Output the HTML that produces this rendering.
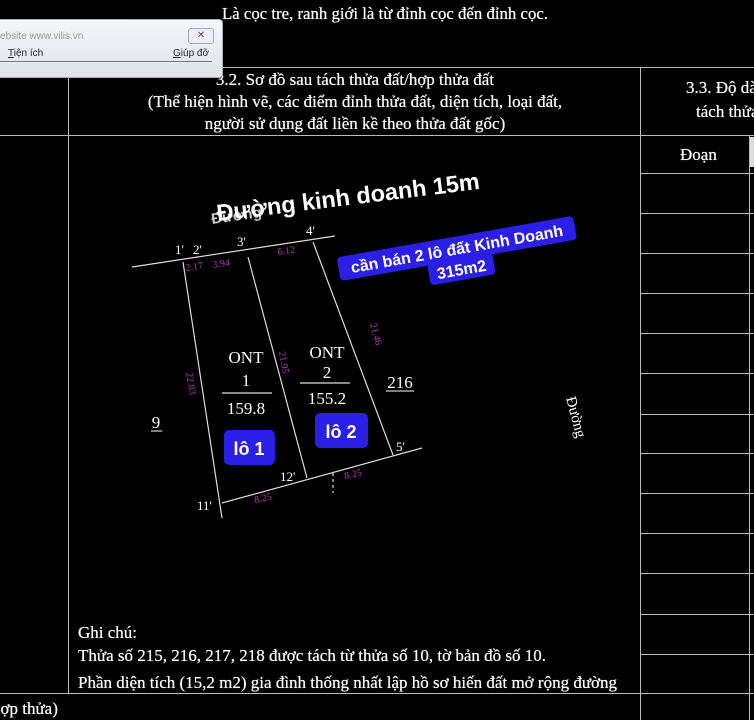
<!DOCTYPE html>
<html><head><meta charset="utf-8"><style>
html,body{margin:0;padding:0;background:#000;}
body{width:754px;height:720px;position:relative;overflow:hidden;font-family:"Liberation Serif","DejaVu Serif",serif;color:#fff;}
.t{position:absolute;white-space:nowrap;font-size:17px;text-shadow:0 0 0.6px #fff;}
.h{position:absolute;background:#bbb;height:1px;}
.v{position:absolute;background:#bbb;width:1px;}
</style></head><body>
<div class="t" style="left:222px;top:4px;font-size:16.8px">Là cọc tre, ranh giới là từ đỉnh cọc đến đỉnh cọc.</div>
<div class="h" style="left:0;top:67px;width:754px"></div>
<div class="h" style="left:0;top:135px;width:754px"></div>
<div class="h" style="left:0;top:693px;width:754px"></div>
<div class="v" style="left:68px;top:67px;height:626px"></div>
<div class="v" style="left:640px;top:67px;height:653px"></div>
<div class="v" style="left:749px;top:135px;height:585px"></div>
<div class="h" style="left:640px;top:173px;width:114px"></div>
<div class="h" style="left:640px;top:213px;width:114px"></div>
<div class="h" style="left:640px;top:253px;width:114px"></div>
<div class="h" style="left:640px;top:293px;width:114px"></div>
<div class="h" style="left:640px;top:333px;width:114px"></div>
<div class="h" style="left:640px;top:373px;width:114px"></div>
<div class="h" style="left:640px;top:414px;width:114px"></div>
<div class="h" style="left:640px;top:453px;width:114px"></div>
<div class="h" style="left:640px;top:493px;width:114px"></div>
<div class="h" style="left:640px;top:533px;width:114px"></div>
<div class="h" style="left:640px;top:573px;width:114px"></div>
<div class="h" style="left:640px;top:614px;width:114px"></div>
<div class="h" style="left:640px;top:654px;width:114px"></div>
<div style="position:absolute;left:750px;top:137px;width:4px;height:30px;background:#ddd"></div>

<div class="t" style="left:0;width:710px;text-align:center;top:70px">3.2. Sơ đồ sau tách thửa đất/hợp thửa đất</div>
<div class="t" style="left:0;width:710px;text-align:center;top:92px">(Thể hiện hình vẽ, các điểm đỉnh thửa đất, diện tích, loại đất,</div>
<div class="t" style="left:0;width:710px;text-align:center;top:114px">người sử dụng đất liền kề theo thửa đất gốc)</div>
<div class="t" style="left:686px;top:78px">3.3. Độ dài</div>
<div class="t" style="left:696px;top:102px">tách thửa</div>
<div class="t" style="left:680px;top:145px">Đoạn</div>

<div class="t" style="left:78px;top:623px">Ghi chú:</div>
<div class="t" style="left:78px;top:646px">Thửa số 215, 216, 217, 218 được tách từ thửa số 10, tờ bản đồ số 10.</div>
<div class="t" style="left:78px;top:673px">Phần diện tích (15,2 m2) gia đình thống nhất lập hồ sơ hiến đất mở rộng đường</div>
<div class="t" style="left:-8px;top:699px">hợp thửa)</div>

<svg width="754" height="720" style="position:absolute;left:0;top:0" font-family="Liberation Serif, serif">
<g stroke="#ddd" stroke-width="1.2" fill="none">
<line x1="132" y1="267" x2="335" y2="236"/>
<line x1="183" y1="262" x2="222" y2="518"/>
<line x1="248" y1="257" x2="307" y2="478"/>
<line x1="313" y1="242" x2="393" y2="455"/>
<line x1="222" y1="503" x2="422" y2="448"/>
<line x1="333" y1="473" x2="333" y2="493" stroke-dasharray="3 3"/>
<line x1="222" y1="393" x2="272" y2="393"/>
<line x1="300" y1="383" x2="350" y2="383"/>
</g>
<g fill="#c030c0" font-size="10">
<text x="186" y="271" transform="rotate(-8 186 271)">2.17</text>
<text x="213" y="268" transform="rotate(-8 213 268)">3.94</text>
<text x="278" y="255" transform="rotate(-8 278 255)">6.12</text>
<text x="186" y="373" transform="rotate(80 186 373)">22.83</text>
<text x="279" y="352" transform="rotate(80 279 352)">21.95</text>
<text x="370" y="324" transform="rotate(75 370 324)">21.46</text>
<text x="345" y="479" transform="rotate(-12 345 479)">8.25</text>
<text x="255" y="503" transform="rotate(-12 255 503)">8.25</text>
</g>
<g fill="#fff" font-size="13">
<text x="175" y="254">1'</text><text x="193" y="254">2'</text><text x="237" y="246">3'</text><text x="306" y="235">4'</text>
<text x="197" y="510">11'</text><text x="280" y="481">12'</text><text x="396" y="451">5'</text>
</g>
<g fill="#fff" font-size="17" text-anchor="middle">
<text x="246" y="363">ONT</text><text x="246" y="386">1</text><text x="246" y="414">159.8</text>
<text x="327" y="358">ONT</text><text x="327" y="378">2</text><text x="327" y="404">155.2</text>
<text x="400" y="388">216</text><text x="156" y="428">9</text>
</g>
<line x1="386" y1="391" x2="414" y2="391" stroke="#fff"/>
<line x1="151" y1="431" x2="162" y2="431" stroke="#fff"/>
<text x="566" y="398" fill="#fff" font-size="15" transform="rotate(75 566 398)">Đường</text>
<g font-family="Liberation Sans, sans-serif" font-weight="bold">
<text x="212" y="224" fill="#ccc" font-size="15" transform="rotate(-8 212 224)">Đường</text>
<text x="349" y="205" fill="#fff" font-size="23.5" text-anchor="middle" transform="rotate(-7 349 205)">Đường kinh doanh 15m</text>
<g transform="rotate(-10 460 255)">
<rect x="338" y="236" width="240" height="24" rx="4" fill="#2b1fe6"/>
<rect x="426" y="258" width="66" height="22" rx="4" fill="#2b1fe6"/>
<text x="458" y="254" fill="#fff" font-size="16" text-anchor="middle">cần bán 2 lô đất Kinh Doanh</text>
<text x="459" y="275" fill="#fff" font-size="16" text-anchor="middle">315m2</text>
</g>
<rect x="224" y="430" width="51" height="35" rx="5" fill="#2b1fe6"/>
<text x="249" y="455" fill="#fff" font-size="18" text-anchor="middle">lô 1</text>
<rect x="315" y="413" width="53" height="35" rx="5" fill="#2b1fe6"/>
<text x="341" y="438" fill="#fff" font-size="18" text-anchor="middle">lô 2</text>
</g>
</svg>

<div style="position:absolute;left:0;top:19px;width:222px;height:57px;background:linear-gradient(#f4f6f9,#dfe4ea);border:1px solid #aab;border-left:none;border-radius:0 4px 4px 0;font-family:'Liberation Sans',sans-serif;font-size:10px;color:#222">
<div style="position:absolute;left:0;top:11px;color:#999">ebsite www.vilis.vn</div>
<div style="position:absolute;left:188px;top:8px;width:24px;height:14px;border:1px solid #aaa;border-radius:3px;background:#eef;text-align:center;font-size:10px;line-height:14px;color:#555">✕</div>
<div style="position:absolute;left:8px;top:28px"><u>T</u>iện ích</div>
<div style="position:absolute;left:173px;top:28px"><u>G</u>iúp đỡ</div>
<div style="position:absolute;left:0;top:41px;width:212px;height:1px;background:#777"></div>
</div>
</body></html>
